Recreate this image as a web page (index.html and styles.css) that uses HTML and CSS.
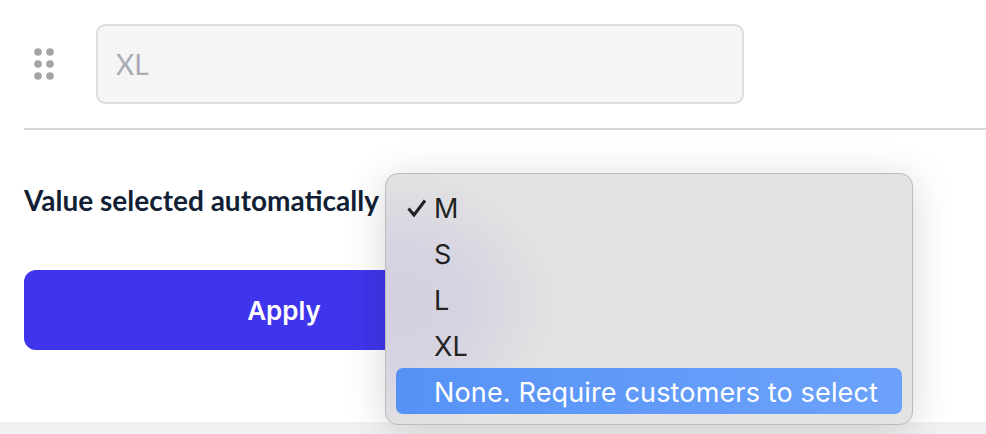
FILE: index.html
```html
<!DOCTYPE html>
<html>
<head>
	<title>Option values</title>
	<meta name="viewport" content="width=device-width, initial-scale=1">
	<link rel="stylesheet" href="styles.css">
</head>
<body>
	<section class="panel">
		<div class="value-row">
			<svg class="drag-handle" width="20" height="32" viewBox="0 0 20 32" aria-hidden="true">
				<circle cx="4" cy="4" r="3.8"/><circle cx="16" cy="4" r="3.8"/>
				<circle cx="4" cy="16" r="3.8"/><circle cx="16" cy="16" r="3.8"/>
				<circle cx="4" cy="28" r="3.8"/><circle cx="16" cy="28" r="3.8"/>
			</svg>
			<div class="value-input">XL</div>
		</div>
		<hr class="divider">
		<div class="auto-label">Value selected automatically</div>
		<button class="btn-apply">Apply</button>
	</section>
	<div class="footer-strip"></div>

	<ul class="menu">
		<li class="menu-item">
			<svg class="check" width="22" height="20" viewBox="0 0 22 20" aria-hidden="true"><path d="M2.5 10.5 L8 17 L19 2.5" /></svg>
			M
		</li>
		<li class="menu-item">S</li>
		<li class="menu-item">L</li>
		<li class="menu-item">XL</li>
		<li class="menu-item selected">None. Require customers to select</li>
	</ul>
</body>
</html>
```

FILE: styles.css
```css
html, body{
	margin: 0;
	height: 434px;
	overflow: hidden;
	background: #ffffff;
}
body{
	display: flex;
	flex-direction: column;
	font-family: "Lato", "Liberation Sans", sans-serif;
}
.panel{
	flex: 1;
	padding: 24px 0 0 24px;
}
.value-row{
	display: flex;
	align-items: center;
	gap: 42px;
	padding-left: 10px;
}
.drag-handle{
	fill: #a3a3a3;
}
.value-input{
	box-sizing: border-box;
	width: 648px;
	height: 80px;
	padding-left: 18px;
	display: flex;
	align-items: center;
	background: #f5f5f5;
	border: 2px solid #dedede;
	border-radius: 9px;
	color: #a8acb2;
	font-size: 28px;
}
.divider{
	height: 2px;
	margin: 24px 0 0 0;
	border: 0;
	background: #d8d8d8;
}
.auto-label{
	margin-top: 53px;
	line-height: 34px;
	font-size: 28px;
	font-weight: 700;
	color: #121f35;
}
.btn-apply{
	display: block;
	width: 520px;
	height: 80px;
	margin-top: 53px;
	border: 0;
	border-radius: 12px;
	background: #3f35ec;
	color: #ffffff;
	font-family: "Inter", "Liberation Sans", sans-serif;
	font-size: 26px;
	font-weight: 600;
}
.footer-strip{
	height: 12px;
	background: #f1f0f2;
}
.menu{
	position: absolute;
	left: 385px;
	top: 173px;
	box-sizing: border-box;
	width: 528px;
	height: 252px;
	margin: 0;
	padding: 10px 10px 0 10px;
	list-style: none;
	border: 1px solid #bcbcbc;
	border-radius: 13px;
	background: radial-gradient(ellipse 165px 135px at 10px 130px, #d2cfe0 0%, #d6d4e1 45%, #e3e3e2 100%), #e3e3e2;
	box-shadow: 0 6px 40px rgba(0,0,0,.16);
	font-family: "Inter", "Liberation Sans", sans-serif;
	font-size: 27px;
	letter-spacing: .15px;
	color: #222222;
}
.menu-item{
	position: relative;
	height: 46px;
	line-height: 50px;
	padding-left: 38px;
	border-radius: 7px;
}
.menu-item.selected{
	background: linear-gradient(90deg, #5692f6, #6ca2fb);
	color: #ffffff;
}
.check{
	position: absolute;
	left: 10px;
	top: 14px;
	fill: none;
	stroke: #222222;
	stroke-width: 3;
}
```
